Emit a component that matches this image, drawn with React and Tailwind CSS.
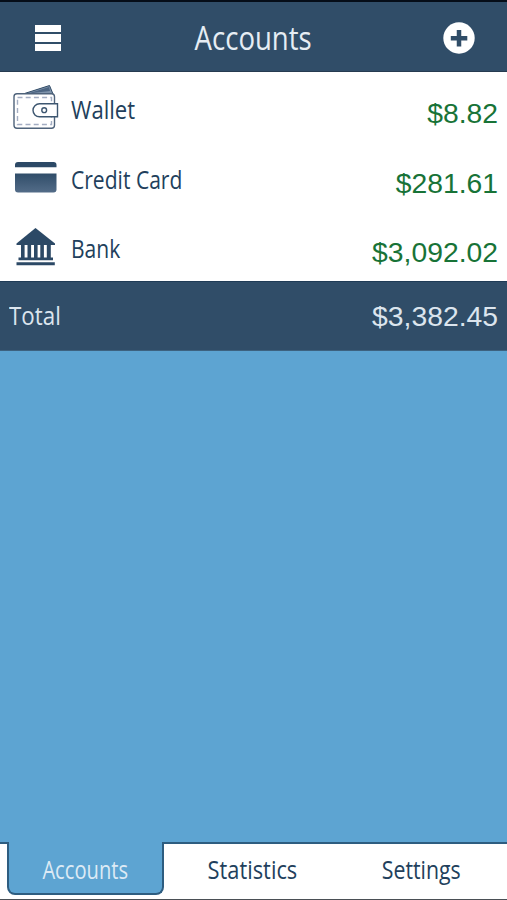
import clsx from "clsx";

const WalletIcon = () => (
    <svg width="60" height="48" viewBox="0 0 60 48" fill="none">
        <path d="M23 10 49.500 1.500 53 10Z" fill="#7f93ab" stroke="#2f4a66" strokeWidth="1" />
        <path d="M28 9.500 49 3 50 7Z" fill="#4c6582" />
        <rect x="14" y="9.800" width="40.500" height="34.500" rx="3" fill="#fff" stroke="#4f637b" strokeWidth="1.400" />
        <rect x="17.500" y="13.500" width="34" height="27" stroke="#a3adc2" strokeWidth="1.400" strokeDasharray="5 3.200" />
        <path
            d="M57.500 19.800H39.500a6.500 6.500 0 0 0 0 13H57.500Z"
            fill="#fff"
            stroke="#3d5670"
            strokeWidth="1.400"
        />
        <circle cx="44.200" cy="26.200" r="2.400" stroke="#3d5670" strokeWidth="1.400" />
    </svg>
);

const CardIcon = () => (
    <svg width="58" height="34" viewBox="0 0 58 34">
        <defs>
            <linearGradient id="card" x1="0" y1="0" x2="0" y2="1">
                <stop offset="0" stopColor="#304d69" />
                <stop offset="1" stopColor="#536c88" />
            </linearGradient>
        </defs>
        <path d="M15 7.200V5a3 3 0 0 1 3-3h35.500a3 3 0 0 1 3 3V7.200Z" fill="#2c4966" />
        <path d="M15 13.500H56.500V29.500a3 3 0 0 1-3 3H18a3 3 0 0 1-3-3Z" fill="url(#card)" />
    </svg>
);

const BankIcon = () => (
    <svg width="58" height="42" viewBox="0 0 58 42" fill="#2c4966">
        <path d="M35.500 1 55 16.500V18H16.500V16.500Z" />
        <path d="M21 18h3.600v13H21zM27.500 18h3.600v13h-3.600zM34 18h3.600v13H34zM40.300 18h3.600v13h-3.600zM46.800 18h4v13h-4z" />
        <path d="M18.500 30.500h34.500v2.800H18.500zM16.500 35.200h38.300v3H16.500z" />
    </svg>
);

const accounts = [
    { name: "Wallet", amount: "$8.82", icon: <WalletIcon />, iconTop: "mt-[12px]", scale: "scale-x-[0.85]" },
    { name: "Credit Card", amount: "$281.61", icon: <CardIcon />, iconTop: "mt-[18px]", scale: "scale-x-[0.81]" },
    { name: "Bank", amount: "$3,092.02", icon: <BankIcon />, iconTop: "mt-[16px]", scale: "scale-x-[0.81]" },
];

const Label = ({ className, children }) => (
    <span
        className={clsx(
            "inline-block whitespace-nowrap font-['Open_Sans',sans-serif]",
            className
        )}
    >
        {children}
    </span>
);

const Amount = ({ className, children }) => (
    <span
        className={clsx(
            "font-['Liberation_Sans',Arial,sans-serif] text-[28.300px] leading-[34px]",
            className
        )}
    >
        {children}
    </span>
);

const Header = () => (
    <header className="flex h-[72px] shrink-0 items-center justify-between border-t-2 border-b border-t-[#050d18] border-b-[#263b50] bg-[#304d68] pt-[2px] pr-8 pl-[35px]">
        <button className="flex w-[26px] flex-col gap-[2px]">
            <span className="h-[7px] bg-white" />
            <span className="h-[8px] bg-white" />
            <span className="h-[7px] bg-white" />
        </button>
        <Label className="ml-[3px] scale-x-[0.835] text-[33px] leading-[40px] text-[#e6edf4]">
            Accounts
        </Label>
        <button>
            <svg width="32" height="32" viewBox="0 0 32 32">
                <circle cx="16" cy="16" r="15.700" fill="#fff" />
                <path d="M16 8v16.500M7.800 16.200h16.500" stroke="#304d68" strokeWidth="4.500" />
            </svg>
        </button>
    </header>
);

const AccountRow = ({ name, amount, icon, iconTop, scale }) => (
    <li className="flex h-[69.600px] items-start justify-between pr-[9px]">
        <div className="flex">
            <div className={clsx("w-[70.500px]", iconTop)}>{icon}</div>
            <Label
                className={clsx(
                    "mt-[19px] origin-left text-[26px] leading-[36px] text-[#223f5c]",
                    scale
                )}
            >
                {name}
            </Label>
        </div>
        <Amount className="mt-[24px] text-[#187337]">{amount}</Amount>
    </li>
);

const TabBar = () => (
    <nav className="flex h-[58px] shrink-0 border-b border-[#4a4f55] bg-white">
        <div className="w-[7px] border-t-2 border-[#2e5d80]" />
        <button className="flex h-[53px] w-[157px] justify-center rounded-b-[8px] border-x-2 border-b-2 border-[#2e5d80] bg-[#5da4d2]">
            <Label className="mt-[9px] scale-x-[0.790] text-[25.500px] leading-[36px] text-[#dceaf5]">
                Accounts
            </Label>
        </button>
        <div className="grid flex-1 grid-cols-2 border-t-2 border-[#2e5d80]">
            <button className="flex justify-center pl-[5px]">
                <Label className="mt-[7px] scale-x-[0.855] text-[25.500px] leading-[36px] text-[#223f5c]">
                    Statistics
                </Label>
            </button>
            <button className="flex justify-center pl-px">
                <Label className="mt-[7px] scale-x-[0.835] text-[25.500px] leading-[36px] text-[#223f5c]">
                    Settings
                </Label>
            </button>
        </div>
    </nav>
);

export default function App() {
    return (
        <div className="flex h-[900px] w-[507px] flex-col overflow-hidden bg-[#5da4d2]">
            <Header />
            <ul className="h-[209px] shrink-0 bg-white">
                {accounts.map((account) => (
                    <AccountRow key={account.name} {...account} />
                ))}
            </ul>
            <div className="flex h-[70px] shrink-0 items-start justify-between border-t border-b border-t-[#1f3b56] border-b-[#3d6280] bg-[#304d68] pr-[9px] pl-[9px]">
                <Label className="mt-[15px] origin-left scale-x-[0.860] text-[26px] leading-[36px] text-[#dce5ee]">
                    Total
                </Label>
                <Amount className="mt-[17px] text-[#dce5ee]">$3,382.45</Amount>
            </div>
            <main className="flex-1" />
            <TabBar />
        </div>
    );
}
